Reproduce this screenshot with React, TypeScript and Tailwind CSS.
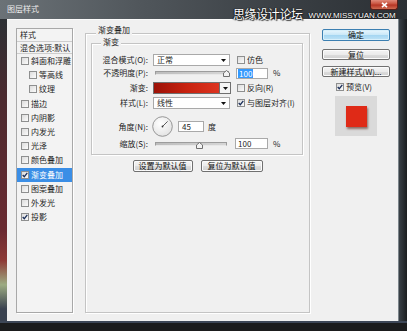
import React from "react";

function Cb({ checked }: { checked?: boolean }) {
  return (
    <span className="w-[8px] h-[8px] border border-[#8e8f8f] bg-[linear-gradient(135deg,#dcdcdc,#fbfbfb)] flex items-center justify-center shrink-0">
      {checked && (
        <svg width="6" height="6" viewBox="0 0 6 6">
          <path d="M0.7 3 L2.3 4.7 L5.3 0.9" stroke="#1b2f5a" strokeWidth="1.3" fill="none" />
        </svg>
      )}
    </span>
  );
}

function Arrow() {
  return (
    <svg width="5" height="3" viewBox="0 0 5 3">
      <path d="M0 0 H5 L2.5 3 Z" fill="#111" />
    </svg>
  );
}

function Thumb() {
  return (
    <svg width="7" height="7" viewBox="0 0 7 7">
      <path d="M3.5 0.5 L6.5 3 V6.5 H0.5 V3 Z" fill="#f2f2f2" stroke="#6f6f6f" strokeWidth="1" />
    </svg>
  );
}

function Btn({ children, w, primary }: { children: React.ReactNode; w: string; primary?: boolean }) {
  return (
    <div
      className={
        primary
          ? "h-[12px] w-[68px] rounded-[2px] border border-[#3c7fb1] bg-[linear-gradient(#e8f6fd,#c9e8f8_50%,#a4d6f2_51%,#bfe3f6)] shadow-[inset_0_0_0_1px_#d8f0fb] flex items-center justify-center text-[8px] leading-none text-[#111]"
          : "rounded-[2px] border border-[#707070] bg-[linear-gradient(#f4f4f4,#ebebeb_50%,#dddddd_51%,#d0d0d0)] shadow-[inset_0_0_0_1px_#fbfbfb] flex items-center justify-center text-[8px] leading-none text-[#111] " + w
      }
    >
      {children}
    </div>
  );
}

const items: { t: string; indent?: boolean; checked?: boolean; sel?: boolean }[] = [
  { t: "斜面和浮雕" },
  { t: "等高线", indent: true },
  { t: "纹理", indent: true },
  { t: "描边" },
  { t: "内阴影" },
  { t: "内发光" },
  { t: "光泽" },
  { t: "颜色叠加" },
  { t: "渐变叠加", checked: true, sel: true },
  { t: "图案叠加" },
  { t: "外发光" },
  { t: "投影", checked: true },
];

export default function App() {
  return (
    <div className="relative w-[407px] h-[331px] overflow-hidden bg-[#1c1e1f] flex flex-col font-['Noto_Sans_CJK_SC','Noto_Sans',sans-serif] text-[8px] leading-none text-[#1c1c1c]">
      {/* title bar */}
      <div className="h-[19px] shrink-0 flex items-start bg-[linear-gradient(90deg,#6b7277,#50565b_35%,#3a3f44_70%,#2b3034)]">
        <div className="pl-[7px] pt-[5px] text-[8px] text-[#ececec]">图层样式</div>
        <div className="ml-auto mr-[9px] w-[28px] h-[10px] rounded-b-[3px] border border-t-0 border-[#5a1e18] bg-[linear-gradient(#e08a7a,#c8503c_45%,#b53424_55%,#cf6a50)] flex items-center justify-center">
          <svg width="7" height="6" viewBox="0 0 7 6">
            <path d="M1 0.8 L6 5.2 M6 0.8 L1 5.2" stroke="#fff" strokeWidth="1.6" />
          </svg>
        </div>
      </div>

      {/* watermark overlay */}
      <div className="absolute left-[233px] top-[7px] flex items-end gap-[6px] text-white">
        <span className="text-[12px] leading-[14px] tracking-[-0.4px] [text-shadow:0_0_1px_#000,1px_1px_1px_#222,-1px_0_1px_#222]">思缘设计论坛</span>
        <span className="font-['Liberation_Sans',sans-serif] text-[8px] leading-[10px] [text-shadow:0_0_1px_#000,1px_1px_1px_#222,-1px_0_1px_#222]">WWW.MISSYUAN.COM</span>
      </div>

      <div className="flex flex-1">
        {/* left frame */}
        <div className="w-[7px] shrink-0 bg-[linear-gradient(#2c3034,#4a2a2f_25%,#6a2a31_70%,#8d3a36_80%,#9cab82_88%,#3a4250_96%)]" />
        {/* body */}
        <div className="w-[391px] h-[302px] bg-[#f0f0f0] border-t border-[#fafafa] flex items-start pl-[9px] pt-[8px]">
          {/* styles list */}
          <div className="w-[57px] h-[285px] border border-[#a8a8a8] bg-[#f3f3f3] shadow-[1px_1px_0_#fff] flex flex-col shrink-0">
            <div className="h-[13px] border-b border-[#cdcdcd] flex items-center pl-[3px] shrink-0">样式</div>
            <div className="h-[12px] border-b border-[#cdcdcd] flex items-center pl-[3px] whitespace-nowrap overflow-hidden shrink-0">混合选项:默认</div>
            {items.map((it) => (
              <div
                key={it.t}
                className={
                  "h-[14.2px] flex items-center gap-[2px] whitespace-nowrap shrink-0 " +
                  (it.indent ? "pl-[12px] " : "pl-[4px] ") +
                  (it.sel ? "bg-[#3a8ee6] text-white" : "")
                }
              >
                <Cb checked={it.checked} />
                <span>{it.t}</span>
              </div>
            ))}
          </div>

          {/* middle group */}
          <div className="ml-[12px] mt-[5px] w-[225px] h-[280px] border border-[#c4c4c4] shadow-[inset_1px_1px_0_#fff,1px_1px_0_#fff] flex flex-col shrink-0">
            <div className="-mt-[9px] ml-[10px] px-[2px] h-[10px] w-fit bg-[#f0f0f0] flex items-center">渐变叠加</div>
            {/* inner group */}
            <div className="ml-[5px] mt-[8px] w-[212px] h-[112px] border border-[#c4c4c4] shadow-[inset_1px_1px_0_#fff,1px_1px_0_#fff] flex flex-col">
              <div className="-mt-[7px] ml-[9px] px-[2px] h-[10px] w-fit bg-[#f0f0f0] flex items-center">渐变</div>

              {/* row 1 */}
              <div className="mt-[7px] h-[12px] flex items-center">
                <div className="w-[56px] text-right whitespace-nowrap">混合模式(O):</div>
                <div className="ml-[5px] w-[77px] h-[12px] border border-[#a9a9a9] bg-white flex items-center justify-between pl-[3px] pr-[3px]">
                  <span>正常</span>
                  <Arrow />
                </div>
                <div className="ml-[7px] flex items-center gap-[2px]">
                  <Cb />
                  <span>仿色</span>
                </div>
              </div>

              {/* row 2 */}
              <div className="mt-[1px] h-[12px] flex items-center">
                <div className="w-[56px] text-right whitespace-nowrap">不透明度(P):</div>
                <div className="ml-[7px] w-[74px] h-[4px] relative border border-[#9c9c9c] border-b-[#e8e8e8] bg-[linear-gradient(90deg,#bdbdbd,#d6d6d6)]">
                  <div className="absolute left-[67px] -top-[2px]">
                    <Thumb />
                  </div>
                </div>
                <div className="ml-[7px] w-[32px] h-[11px] border border-[#a9a9a9] bg-white flex items-center pl-[1px]">
                  <span className="bg-[#3399ff] text-white px-[1px] leading-[9px]">100</span>
                </div>
                <span className="ml-[5px]">%</span>
              </div>

              {/* row 3 */}
              <div className="mt-[3px] h-[12px] flex items-center">
                <div className="w-[56px] text-right whitespace-nowrap">渐变:</div>
                <div className="ml-[5px] w-[67px] h-[12px] border border-[#6f6f6f] bg-[linear-gradient(90deg,#9c1208,#c8220f_50%,#dc3420)]" />
                <div className="w-[11px] h-[12px] border border-l-0 border-[#6f6f6f] bg-[#f4f4f4] flex items-center justify-center">
                  <Arrow />
                </div>
                <div className="ml-[6px] flex items-center gap-[2px]">
                  <Cb />
                  <span>反向(R)</span>
                </div>
              </div>

              {/* row 4 */}
              <div className="mt-[3px] h-[12px] flex items-center">
                <div className="w-[56px] text-right whitespace-nowrap">样式(L):</div>
                <div className="ml-[5px] w-[77px] h-[12px] border border-[#a9a9a9] bg-white flex items-center justify-between pl-[3px] pr-[3px]">
                  <span>线性</span>
                  <Arrow />
                </div>
                <div className="ml-[7px] flex items-center gap-[2px] whitespace-nowrap">
                  <Cb checked />
                  <span>与图层对齐(I)</span>
                </div>
              </div>

              {/* row 5 */}
              <div className="mt-[7px] h-[21px] flex items-center">
                <div className="w-[56px] text-right whitespace-nowrap">角度(N):</div>
                <svg className="ml-[4px]" width="21" height="21" viewBox="0 0 21 21">
                  <defs>
                    <radialGradient id="dg" cx="0.4" cy="0.35" r="0.7">
                      <stop offset="0" stopColor="#ffffff" />
                      <stop offset="1" stopColor="#e2e2e2" />
                    </radialGradient>
                  </defs>
                  <circle cx="10.5" cy="10.5" r="9.8" fill="url(#dg)" stroke="#8c8c8c" strokeWidth="0.9" />
                  <line x1="10.5" y1="10.5" x2="15.6" y2="5.4" stroke="#333" strokeWidth="0.8" />
                  <circle cx="10.5" cy="10.5" r="0.9" fill="#333" />
                </svg>
                <div className="ml-[5px] w-[26px] h-[11px] border border-[#a9a9a9] bg-white flex items-center pl-[3px]">45</div>
                <span className="ml-[4px]">度</span>
              </div>

              {/* row 6 */}
              <div className="mt-[1px] h-[11px] flex items-center">
                <div className="w-[56px] text-right whitespace-nowrap">缩放(S):</div>
                <div className="ml-[7px] w-[72px] h-[4px] relative border border-[#9c9c9c] border-b-[#e8e8e8] bg-[linear-gradient(90deg,#bdbdbd,#d6d6d6)]">
                  <div className="absolute left-[40px] -top-[1px]">
                    <Thumb />
                  </div>
                </div>
                <div className="ml-[8px] w-[33px] h-[11px] border border-[#a9a9a9] bg-white flex items-center pl-[2px]">100</div>
                <span className="ml-[5px]">%</span>
              </div>
            </div>

            {/* default buttons */}
            <div className="mt-[5px] flex justify-center gap-[8px]">
              <Btn w="w-[60px] h-[12px]">设置为默认值</Btn>
              <Btn w="w-[62px] h-[12px]">复位为默认值</Btn>
            </div>
          </div>

          {/* right column */}
          <div className="ml-[12px] w-[68px] flex flex-col shrink-0 pt-[1px]">
            <Btn w="" primary>确定</Btn>
            <div className="mt-[8px]">
              <Btn w="w-[68px] h-[11px]">复位</Btn>
            </div>
            <div className="mt-[6px]">
              <Btn w="w-[68px] h-[11px]">新建样式(W)...</Btn>
            </div>
            <div className="mt-[6px] ml-[14px] flex items-center gap-[2px] h-[8px]">
              <Cb checked />
              <span>预览(V)</span>
            </div>
            <div className="mt-[5px] ml-[13px] w-[42px] h-[40px] bg-[#dadada] flex items-center justify-center">
              <div className="w-[21px] h-[21px] bg-[#df2a17] shadow-[1px_2px_2px_rgba(80,20,10,0.55)]" />
            </div>
          </div>
        </div>
        {/* right frame */}
        <div className="w-[9px] shrink-0 border-l border-[#7c858b] bg-[linear-gradient(90deg,#3a4147,#1b1e20)]" />
      </div>

      {/* bottom frame */}
      <div className="h-[10px] shrink-0 border-t-[2px] border-[#3d4757] bg-[#1b1c1d]" />
    </div>
  );
}
